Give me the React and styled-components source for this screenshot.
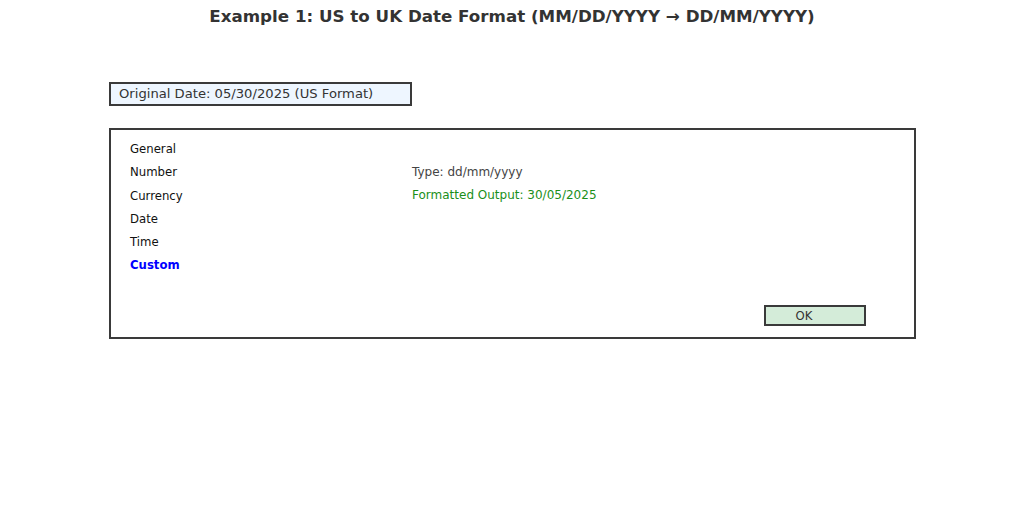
import React from 'react';
import styled, { createGlobalStyle } from 'styled-components';

const GlobalStyle = createGlobalStyle`
  html, body {
    margin: 0;
    padding: 0;
    background: #ffffff;
    font-family: "DejaVu Sans", "Liberation Sans", sans-serif;
  }
`;

const Page = styled.div`
  width: 1024px;
  height: 510px;
  display: flex;
  flex-direction: column;
  box-sizing: border-box;
  padding: 6px 109px 0;
`;

const Title = styled.h1`
  margin: 0;
  text-align: center;
  font-size: 16.7px;
  line-height: 20px;
  font-weight: bold;
  color: #333333;
`;

const OriginalBox = styled.div`
  margin-top: 56px;
  width: 303px;
  height: 24px;
  box-sizing: border-box;
  border: 2px solid #3a3a3a;
  background: #eef6ff;
  color: #333333;
  font-size: 13.15px;
  line-height: 20px;
  padding: 0 0 0 8px;
`;

const Dialog = styled.div`
  margin-top: 22px;
  width: 807px;
  height: 211px;
  box-sizing: border-box;
  border: 2px solid #3a3a3a;
  display: grid;
  grid-template-columns: 282px 1fr;
  grid-template-rows: 1fr auto;
  padding: 8px 0 11px 19px;
`;

const Menu = styled.ul`
  list-style: none;
  margin: 0;
  padding: 0;
`;

const MenuItem = styled.li`
  font-size: 11.7px;
  line-height: 23.3px;
  color: ${p => (p.$active ? '#0000ff' : '#111111')};
  font-weight: ${p => (p.$active ? 'bold' : 'normal')};
`;

const Details = styled.div`
  padding-top: 23px;
`;

const DetailLine = styled.div`
  font-size: 12px;
  line-height: 23.3px;
  color: ${p => p.$color || '#444444'};
`;

const Footer = styled.div`
  grid-column: 1 / -1;
  display: flex;
  justify-content: flex-end;
  padding-right: 48px;
`;

const OkButton = styled.button`
  width: 102px;
  height: 21px;
  box-sizing: border-box;
  border: 2px solid #3a3a3a;
  background: #d4ecd9;
  color: #333333;
  font-family: inherit;
  font-size: 11.7px;
  padding: 1px 22px 0 0;
  cursor: pointer;
`;

const menuItems = ['General', 'Number', 'Currency', 'Date', 'Time', 'Custom'];

export default function App() {
  return (
    <>
      <GlobalStyle />
      <Page>
        <Title>Example 1: US to UK Date Format (MM/DD/YYYY → DD/MM/YYYY)</Title>
        <OriginalBox>Original Date: 05/30/2025 (US Format)</OriginalBox>
        <Dialog>
          <Menu>
            {menuItems.map(item => (
              <MenuItem key={item} $active={item === 'Custom'}>{item}</MenuItem>
            ))}
          </Menu>
          <Details>
            <DetailLine>Type: dd/mm/yyyy</DetailLine>
            <DetailLine $color="#1a8f1a">Formatted Output: 30/05/2025</DetailLine>
          </Details>
          <Footer>
            <OkButton>OK</OkButton>
          </Footer>
        </Dialog>
      </Page>
    </>
  );
}
